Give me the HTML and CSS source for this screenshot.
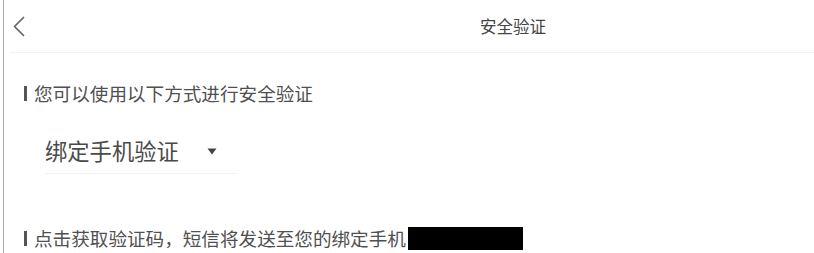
FILE: index.html
```html
<!DOCTYPE html>
<html lang="zh-CN">
<head>
<meta charset="utf-8">
<title>安全验证</title>
<link rel="stylesheet" href="styles.css">
</head>
<body>
<div class="frame">
  <div class="header">
    <svg class="back" width="12" height="21" viewBox="0 0 12 21"><polyline points="10.5,1.5 1.5,10.5 10.5,19.5" fill="none" stroke="#666" stroke-width="1.7" stroke-linecap="round" stroke-linejoin="round"/></svg>
    <div class="title">安全验证</div>
  </div>
  <div class="content">
    <div class="tip tip-first"><span class="bar"></span><span class="tip-text">您可以使用以下方式进行安全验证</span></div>
    <div class="select">
      <span class="select-text">绑定手机验证</span>
      <svg class="caret" width="10" height="7" viewBox="0 0 10 7"><polygon points="0.5,0.5 9.5,0.5 5,6.5" fill="#444"/></svg>
    </div>
    <div class="tip tip-second"><span class="bar"></span><span class="tip-text">点击获取验证码，短信将发送至您的绑定手机</span><span class="mask"></span></div>
  </div>
</div>
</body>
</html>
```
FILE: styles.css
```css
html, body {
  margin: 0;
  padding: 0;
  background: #fff;
}
body {
  font-family: "Noto Sans CJK SC", "Noto Sans", sans-serif;
  color: #555;
}
.frame {
  margin-left: 3px;
  border-left: 1px solid #a9a9a9;
  height: 253px;
  box-sizing: border-box;
  overflow: hidden;
}
.header {
  margin-left: 6px;
  height: 52px;
  border-bottom: 1px solid #f3f3f3;
  display: flex;
  align-items: center;
  padding-left: 3px;
}
.back {
  display: block;
  flex: none;
}
.title {
  margin-left: 455px;
  font-size: 16.5px;
  line-height: 50px;
  color: #444;
}
.content {
  padding-left: 20px;
}
.tip {
  display: flex;
  align-items: center;
  height: 24px;
}
.tip-first {
  margin-top: 28px;
}
.tip-second {
  margin-top: 52px;
}
.bar {
  width: 3px;
  height: 15px;
  background: #555;
  margin-right: 7px;
  flex: none;
}
.tip-text {
  font-size: 18.6px;
  line-height: 24px;
  color: #505050;
}
.mask {
  display: inline-block;
  width: 115px;
  height: 23px;
  background: #000;
  margin-left: 2px;
}
.select {
  margin-top: 30px;
  margin-left: 21px;
  width: 193px;
  padding-bottom: 8px;
  border-bottom: 1px solid #f2f2f2;
  display: flex;
  align-items: center;
}
.select-text {
  font-size: 22.3px;
  line-height: 30px;
  color: #4a4a4a;
}
.caret {
  display: block;
  margin-left: 28px;
  margin-top: 2px;
}
```
